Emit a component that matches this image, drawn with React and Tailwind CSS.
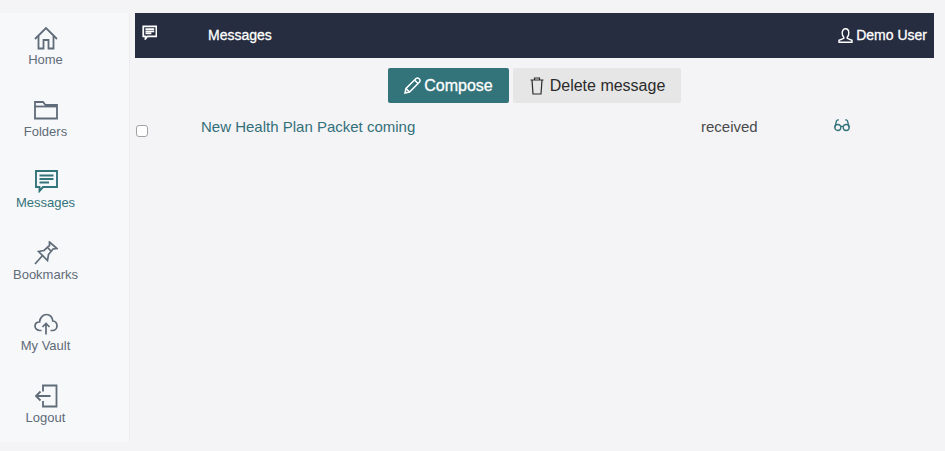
import React from 'react';

const HomeIcon = () => (
  <svg width="24" height="24" viewBox="0 0 24 24" fill="none" stroke="currentColor" strokeWidth="1.8">
    <path d="M1 13 L12 2 L23 13" />
    <path d="M4.5 10 V22.5 H9.5 V14 H14.5 V22.5 H19.5 V10" />
  </svg>
);

const FolderIcon = () => (
  <svg width="24" height="20" viewBox="0 0 24 20" fill="none" stroke="currentColor" strokeWidth="1.8">
    <path d="M1 18.5 V2 H9 L11.5 5 H23 V18.5 Z" />
    <path d="M1 6.5 H23" />
  </svg>
);

const MessageIcon = ({ size = 24, stroke = 1.9 }) => (
  <svg width={size} height={size} viewBox="0 0 24 24" fill="none" stroke="currentColor" strokeWidth={stroke}>
    <path d="M2 2 H23 V18 H9 L5.5 22 V18 H2 Z" />
    <path d="M5.5 6.5 H19.5 M5.5 10 H19.5 M5.5 13.5 H15" />
  </svg>
);

const PinIcon = () => (
  <svg width="24" height="24" viewBox="0 0 24 24" fill="none" stroke="currentColor" strokeWidth="1.7">
    <path d="M1 23 L9 14" />
    <path d="M4.5 10.5 L13.5 19.5 L14.5 13.5 L19 8 L23 7.5 L15.5 1 L15.5 4.5 L10 9.5 Z" />
    <path d="M14 7 L17 10" />
  </svg>
);

const CloudIcon = () => (
  <svg width="24" height="22" viewBox="0 0 24 22" fill="none" stroke="currentColor" strokeWidth="1.7">
    <path d="M7.5 17.5 H6 C3 17.5 1 15.5 1 13 C1 10.5 3 8.8 5.5 9 C6 4.5 9 1.5 12.5 1.5 C16 1.5 18.5 4.5 18.8 8 C21.2 8.2 23 10.3 23 13 C23 15.5 21 17.5 18.5 17.5 H16.5" />
    <path d="M12 21.5 V11 M8.5 14 L12 10.5 L15.5 14" />
  </svg>
);

const LogoutIcon = () => (
  <svg width="24" height="24" viewBox="0 0 24 24" fill="none" stroke="currentColor" strokeWidth="1.8">
    <path d="M9 7.5 V1.5 H22.5 V22.5 H9 V17" />
    <path d="M16.5 12 H2 M6.5 7.5 L2 12 L6.5 16.5" />
  </svg>
);

const PencilIcon = () => (
  <svg width="17" height="17" viewBox="0 0 17 17" fill="none" stroke="currentColor" strokeWidth="1.5">
    <path d="M1 16 L2 11.5 L12 1.5 C13 0.7 14.2 0.8 15.2 1.8 C16.2 2.8 16.3 4 15.5 5 L5.5 15 Z" />
    <path d="M2 11.5 L5.5 15 M10.5 3 L14 6.5" />
  </svg>
);

const TrashIcon = () => (
  <svg width="14" height="18" viewBox="0 0 14 18" fill="none" stroke="currentColor" strokeWidth="1.2">
    <path d="M0.5 3 H13.5 M4.5 3 V1 H9.5 V3" />
    <path d="M2 3 L3 17 H11 L12 3" />
  </svg>
);

const UserIcon = () => (
  <svg width="15" height="15" viewBox="0 0 15 15" fill="none" stroke="currentColor" strokeWidth="1.4">
    <path d="M4.2 5 C4.2 2.5 5.5 0.8 7.5 0.8 C9.5 0.8 10.8 2.5 10.8 5 C10.8 7 10 8.5 9.2 9.3 V10.3 L14 12.3 V14.2 H1 V12.3 L5.8 10.3 V9.3 C5 8.5 4.2 7 4.2 5 Z" />
  </svg>
);

const GlassesIcon = () => (
  <svg width="16" height="13" viewBox="0 0 16 13" fill="none" stroke="currentColor" strokeWidth="1.3">
    <circle cx="3.8" cy="8.5" r="3" />
    <circle cx="12.2" cy="8.5" r="3" />
    <path d="M6.8 8 C7.3 7.2 8.7 7.2 9.2 8" />
    <path d="M0.8 8.5 L2.5 2 C2.8 1 3.8 0.8 4.8 1" />
    <path d="M15.2 8.5 L13.5 2 C13.2 1 12.2 0.8 11.2 1" />
  </svg>
);

const navItems = [
  { label: 'Home', icon: <HomeIcon /> },
  { label: 'Folders', icon: <FolderIcon /> },
  { label: 'Messages', icon: <MessageIcon />, active: true },
  { label: 'Bookmarks', icon: <PinIcon /> },
  { label: 'My Vault', icon: <CloudIcon /> },
  { label: 'Logout', icon: <LogoutIcon /> },
];

export default function App() {
  return (
    <div className="flex w-[945px] h-[451px] pt-[13px] overflow-hidden bg-[#f4f4f7] font-['Liberation_Sans',Arial,sans-serif]">
      {/* Sidebar */}
      <nav className="flex flex-col w-[130px] h-[429px] pt-[11px] pr-[38px] bg-[#f7f8fa] border-r border-[#ececef]">
        {navItems.map((item) => (
          <a
            key={item.label}
            className={`flex flex-col shrink-0 items-center h-[71.5px] text-[13px] leading-[15px] ${item.active ? 'text-[#33737a]' : 'text-[#5f6b78]'}`}
          >
            <span className="flex items-center justify-center h-[28px]">{item.icon}</span>
            <span>{item.label}</span>
          </a>
        ))}
      </nav>

      {/* Main */}
      <main className="flex-1 pl-[5px] pr-[11px]">
        <header className="flex items-center h-[45px] bg-[#262d40] text-white text-[14px] font-medium">
          <span className="flex w-[73px] pl-[7px] -mt-[6px]">
            <MessageIcon size={15} stroke={2.8} />
          </span>
          <span className="flex-1 [-webkit-text-stroke:0.3px_white]">Messages</span>
          <span className="flex items-center gap-[3px] pr-[7px] [-webkit-text-stroke:0.3px_white]">
            <UserIcon />
            Demo User
          </span>
        </header>

        <div className="flex justify-center gap-[4px] mt-[10px] pr-[1px]">
          <button className="flex items-center justify-center gap-[3px] w-[121px] h-[35px] pl-[1px] rounded-[2px] bg-[#33737a] text-white text-[16px] [-webkit-text-stroke:0.3px_white]">
            <PencilIcon />
            Compose
          </button>
          <button className="flex items-center justify-center gap-[6px] w-[168px] h-[35px] pl-[2px] rounded-[2px] bg-[#e6e6e6] text-[#2b2b2b] text-[16px]">
            <TrashIcon />
            Delete message
          </button>
        </div>

        <div className="flex items-center h-[48px] text-[15px]">
          <input type="checkbox" className="appearance-none w-[12px] h-[12px] ml-[1px] mr-[1px] mt-[8px] bg-white border border-[#a3a3a3] rounded-[3px]" />
          <span className="w-[500px] ml-[52px] text-[#33707a]">New Health Plan Packet coming</span>
          <span className="w-[133px] text-[#4a4a4a]">received</span>
          <span className="text-[#33737a] -mt-[4px]"><GlassesIcon /></span>
        </div>
      </main>
    </div>
  );
}
